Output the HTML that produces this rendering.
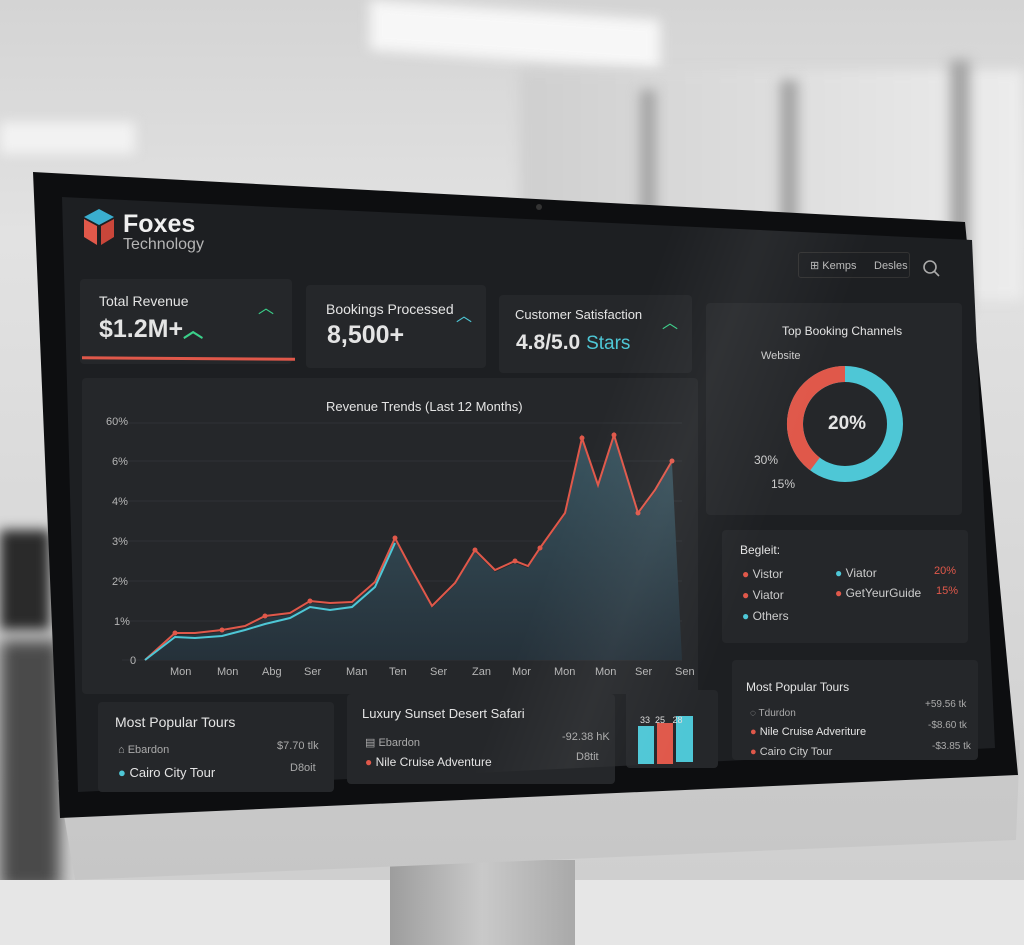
<!DOCTYPE html>
<html><head><meta charset="utf-8"><style>
*{margin:0;padding:0;box-sizing:border-box}
body{width:1024px;height:945px;overflow:hidden;position:relative;font-family:"Liberation Sans",sans-serif;background:linear-gradient(180deg,#d4d4d4 0%,#e2e2e2 25%,#d8d8d8 60%,#cdcdcd 100%)}
.a{position:absolute}
.t{position:absolute;color:#e4e4e4;white-space:nowrap}
.card{position:absolute;background:#25272a;border-radius:4px}
</style></head><body>
<div class="a" style="left:370px;top:10px;width:290px;height:50px;background:#f7f7f7;transform:skewY(4deg);filter:blur(6px)"></div>
<div class="a" style="left:0;top:122px;width:135px;height:32px;background:#f2f2f2;filter:blur(6px)"></div>
<div class="a" style="left:520px;top:70px;width:504px;height:230px;background:linear-gradient(90deg,#cfcfcf,#ececec);filter:blur(6px)"></div>
<div class="a" style="left:640px;top:90px;width:16px;height:190px;background:#a5a5a5;filter:blur(6px)"></div>
<div class="a" style="left:780px;top:80px;width:18px;height:210px;background:#a5a5a5;filter:blur(6px)"></div>
<div class="a" style="left:950px;top:60px;width:20px;height:250px;background:#a5a5a5;filter:blur(6px)"></div>
<div class="a" style="left:0;top:530px;width:50px;height:100px;background:#2a2a2a;filter:blur(6px)"></div>
<div class="a" style="left:0;top:640px;width:60px;height:250px;background:#4a4a4a;filter:blur(8px)"></div>
<div class="a" style="left:0;top:880px;width:1024px;height:65px;background:#e6e6e6"></div>
<div class="a" style="left:390px;top:860px;width:185px;height:85px;background:linear-gradient(90deg,#9d9d9d,#c9c9c9 50%,#a9a9a9)"></div>
<div class="a" style="left:0;top:0;width:1024px;height:945px;background:linear-gradient(180deg,#e2e2e2,#c4c4c4);clip-path:polygon(58px 780px,1020px 740px,1016px 840px,75px 880px)"></div>
<div class="a" style="left:0;top:0;width:1024px;height:945px;background:#0d0e10;clip-path:polygon(33px 172px,965px 222px,1018px 775px,60px 818px)"></div>
<div class="a" style="left:0;top:0;width:1024px;height:945px;background:#1d1f22;clip-path:polygon(62px 197px,972px 240px,995px 748px,78px 792px)"></div>
<div class="a" style="left:536px;top:204px;width:6px;height:6px;border-radius:3px;background:#333"></div>
<svg class="a" style="left:83px;top:209px" width="32" height="38" viewBox="0 0 32 38"><polygon points="16,0 31,8 16,16 1,8" fill="#3aaecf"/><polygon points="1,10 14,17 14,36 1,28" fill="#e0584a"/><polygon points="18,17 31,10 31,28 18,36" fill="#c9463a"/></svg>
<div class="t" style="left:123px;top:210px;font-size:25px;font-weight:bold;color:#f0f0f0">Foxes</div>
<div class="t" style="left:123px;top:236px;font-size:16px;color:#b5b5b5">Technology</div>
<div class="a" style="left:798px;top:252px;width:112px;height:26px;border:1px solid #333;border-radius:3px"></div>
<div class="t" style="left:810px;top:259px;font-size:11px;color:#bbb">⊞ Kemps</div>
<div class="t" style="left:874px;top:260px;font-size:11px;color:#bbb">Desles</div>
<svg class="a" style="left:922px;top:259px" width="20" height="20"><circle cx="8" cy="8" r="6" fill="none" stroke="#aaa" stroke-width="1.6"/><line x1="12.5" y1="12.5" x2="17" y2="17" stroke="#aaa" stroke-width="1.6"/></svg>
<div class="card" style="left:80px;top:279px;width:212px;height:85px"></div>
<div class="a" style="left:82px;top:357px;width:213px;height:3px;background:#e0584a;transform:rotate(0.4deg)"></div>
<div class="t" style="left:99px;top:293px;font-size:14px">Total Revenue</div>
<div class="t" style="left:99px;top:314px;font-size:25px;font-weight:bold">$1.2M+<span style="color:#3bd08a;font-size:20px">︿</span></div>
<div class="t" style="left:258px;top:294px;font-size:16px;color:#3bd08a">︿</div>
<div class="card" style="left:306px;top:285px;width:180px;height:83px"></div>
<div class="t" style="left:326px;top:301px;font-size:14px">Bookings Processed</div>
<div class="t" style="left:327px;top:321px;font-size:25px;font-weight:bold">8,500+</div>
<div class="t" style="left:456px;top:302px;font-size:16px;color:#4ec7d6">︿</div>
<div class="card" style="left:499px;top:295px;width:193px;height:78px"></div>
<div class="t" style="left:515px;top:307px;font-size:13px">Customer Satisfaction</div>
<div class="t" style="left:516px;top:331px;font-size:21px;font-weight:bold">4.8/5.0 <span style="color:#4ec7d6;font-weight:normal;font-size:19px">Stars</span></div>
<div class="t" style="left:662px;top:309px;font-size:16px;color:#3bd08a">︿</div>
<div class="card" style="left:82px;top:378px;width:616px;height:316px"></div>
<div class="t" style="left:326px;top:399px;font-size:13px">Revenue Trends (Last 12 Months)</div>
<svg class="a" style="left:82px;top:378px" width="620" height="320">
<defs><linearGradient id="g" x1="0" y1="0" x2="0" y2="1"><stop offset="0" stop-color="#3a5560"/><stop offset="1" stop-color="#25313a"/></linearGradient></defs>
<g stroke="#2f3236" stroke-width="1"><line x1="40" y1="45" x2="600" y2="45"/><line x1="40" y1="83" x2="600" y2="83"/><line x1="40" y1="123" x2="600" y2="123"/><line x1="40" y1="163" x2="600" y2="163"/><line x1="40" y1="203" x2="600" y2="203"/><line x1="40" y1="243" x2="600" y2="243"/><line x1="40" y1="282" x2="600" y2="282"/></g>
<polygon fill="url(#g)" points="63,282 93,257 113,257 140,254 163,250 183,240 208,237 228,225 248,227 270,226 293,206 313,162 330,194 350,230 373,207 393,174 413,194 433,185 446,190 458,172 483,137 500,62 516,109 532,59 556,137 573,114 590,85 600,282"/>
<polyline fill="none" stroke="#e0584a" stroke-width="2" points="63,282 93,255 113,255 140,252 163,248 183,238 208,235 228,223 248,225 270,224 293,204 313,160 330,192 350,228 373,205 393,172 413,192 433,183 446,188 458,170 483,135 500,60 516,107 532,57 556,135 573,112 590,83"/>
<polyline fill="none" stroke="#4ec7d6" stroke-width="2" points="63,282 93,259 113,260 140,258 163,252 183,246 208,240 228,229 248,232 270,229 293,209 313,165"/>
<g fill="#e0584a"><circle cx="93" cy="255" r="2.5"/><circle cx="140" cy="252" r="2.5"/><circle cx="183" cy="238" r="2.5"/><circle cx="228" cy="223" r="2.5"/><circle cx="313" cy="160" r="2.5"/><circle cx="393" cy="172" r="2.5"/><circle cx="433" cy="183" r="2.5"/><circle cx="458" cy="170" r="2.5"/><circle cx="500" cy="60" r="2.5"/><circle cx="532" cy="57" r="2.5"/><circle cx="556" cy="135" r="2.5"/><circle cx="590" cy="83" r="2.5"/></g>
<g fill="#b5b5b5" font-size="11" font-family="Liberation Sans"><text x="24" y="47">60%</text><text x="30" y="87">6%</text><text x="30" y="127">4%</text><text x="30" y="167">3%</text><text x="30" y="207">2%</text><text x="32" y="247">1%</text><text x="48" y="286">0</text>
<text x="88" y="297">Mon</text><text x="135" y="297">Mon</text><text x="180" y="297">Abg</text><text x="222" y="297">Ser</text><text x="264" y="297">Man</text><text x="307" y="297">Ten</text><text x="348" y="297">Ser</text><text x="390" y="297">Zan</text><text x="430" y="297">Mor</text><text x="472" y="297">Mon</text><text x="513" y="297">Mon</text><text x="553" y="297">Ser</text><text x="593" y="297">Sen</text></g>
</svg>
<div class="card" style="left:706px;top:303px;width:256px;height:212px"></div>
<div class="t" style="left:782px;top:324px;font-size:12px">Top Booking Channels</div>
<div class="t" style="left:761px;top:350px;font-size:11px;color:#ccc">Website</div>
<svg class="a" style="left:784px;top:354px" width="124" height="140"><circle cx="61" cy="70" r="50" fill="none" stroke="#4ec7d6" stroke-width="16"/><path d="M61 20 A50 50 0 0 0 31 110" fill="none" stroke="#e0584a" stroke-width="16"/></svg>
<div class="t" style="left:828px;top:413px;font-size:19px;font-weight:bold">20%</div>
<div class="t" style="left:754px;top:453px;font-size:12px;color:#ccc">30%</div>
<div class="t" style="left:771px;top:477px;font-size:12px;color:#ccc">15%</div>
<div class="card" style="left:722px;top:530px;width:246px;height:113px"></div>
<div class="t" style="left:740px;top:543px;font-size:12px">Begleit:</div>
<div class="t" style="left:742px;top:567px;font-size:12px;color:#ccc"><span style="color:#e0584a">●</span> Vistor</div>
<div class="t" style="left:742px;top:588px;font-size:12px;color:#ccc"><span style="color:#e0584a">●</span> Viator</div>
<div class="t" style="left:742px;top:609px;font-size:12px;color:#ccc"><span style="color:#4ec7d6">●</span> Others</div>
<div class="t" style="left:835px;top:566px;font-size:12px;color:#ccc"><span style="color:#4ec7d6">●</span> Viator</div>
<div class="t" style="left:835px;top:586px;font-size:12px;color:#ccc"><span style="color:#e0584a">●</span> GetYeurGuide</div>
<div class="t" style="left:934px;top:565px;font-size:11px;color:#e0584a">20%</div>
<div class="t" style="left:936px;top:585px;font-size:11px;color:#e0584a">15%</div>
<div class="card" style="left:98px;top:702px;width:236px;height:90px"></div>
<div class="t" style="left:115px;top:714px;font-size:14px">Most Popular Tours</div>
<div class="t" style="left:118px;top:744px;font-size:11px;color:#aaa">⌂ Ebardon</div>
<div class="t" style="left:118px;top:765px;font-size:13px"><span style="color:#4ec7d6">●</span> Cairo City Tour</div>
<div class="t" style="left:277px;top:740px;font-size:11px;color:#aaa">$7.70 tlk</div>
<div class="t" style="left:290px;top:762px;font-size:11px;color:#aaa">D8oit</div>
<div class="card" style="left:347px;top:694px;width:268px;height:90px"></div>
<div class="t" style="left:362px;top:706px;font-size:13px">Luxury Sunset Desert Safari</div>
<div class="t" style="left:365px;top:736px;font-size:11px;color:#aaa">▤ Ebardon</div>
<div class="t" style="left:365px;top:755px;font-size:12px"><span style="color:#e0584a">●</span> Nile Cruise Adventure</div>
<div class="t" style="left:562px;top:731px;font-size:11px;color:#aaa">-92.38 hK</div>
<div class="t" style="left:576px;top:751px;font-size:11px;color:#aaa">D8tit</div>
<div class="card" style="left:626px;top:690px;width:92px;height:78px"></div>
<div class="a" style="left:638px;top:726px;width:16px;height:38px;background:#4ec7d6"></div>
<div class="a" style="left:657px;top:723px;width:16px;height:41px;background:#e0584a"></div>
<div class="a" style="left:676px;top:716px;width:17px;height:46px;background:#4ec7d6"></div>
<div class="t" style="left:640px;top:715px;font-size:9px;color:#ddd">33 &nbsp;25 &nbsp;&nbsp;28</div>
<div class="card" style="left:732px;top:660px;width:246px;height:100px"></div>
<div class="t" style="left:746px;top:680px;font-size:12px">Most Popular Tours</div>
<div class="t" style="left:750px;top:708px;font-size:10px;color:#aaa">◌ Tdurdon</div>
<div class="t" style="left:750px;top:726px;font-size:11px"><span style="color:#e0584a">●</span> Nile Cruise Adveriture</div>
<div class="t" style="left:750px;top:746px;font-size:11px;color:#ccc"><span style="color:#e0584a">●</span> Cairo City Tour</div>
<div class="t" style="left:925px;top:699px;font-size:10px;color:#aaa">+59.56 tk</div>
<div class="t" style="left:928px;top:720px;font-size:10px;color:#aaa">-$8.60 tk</div>
<div class="t" style="left:932px;top:741px;font-size:10px;color:#aaa">-$3.85 tk</div>
<div class="a" style="left:0;top:0;width:1024px;height:945px;background:linear-gradient(110deg,rgba(255,255,255,0) 55%,rgba(255,255,255,0.05) 62%,rgba(255,255,255,0) 70%);clip-path:polygon(62px 197px,972px 240px,995px 748px,78px 792px)"></div>
</body></html>
